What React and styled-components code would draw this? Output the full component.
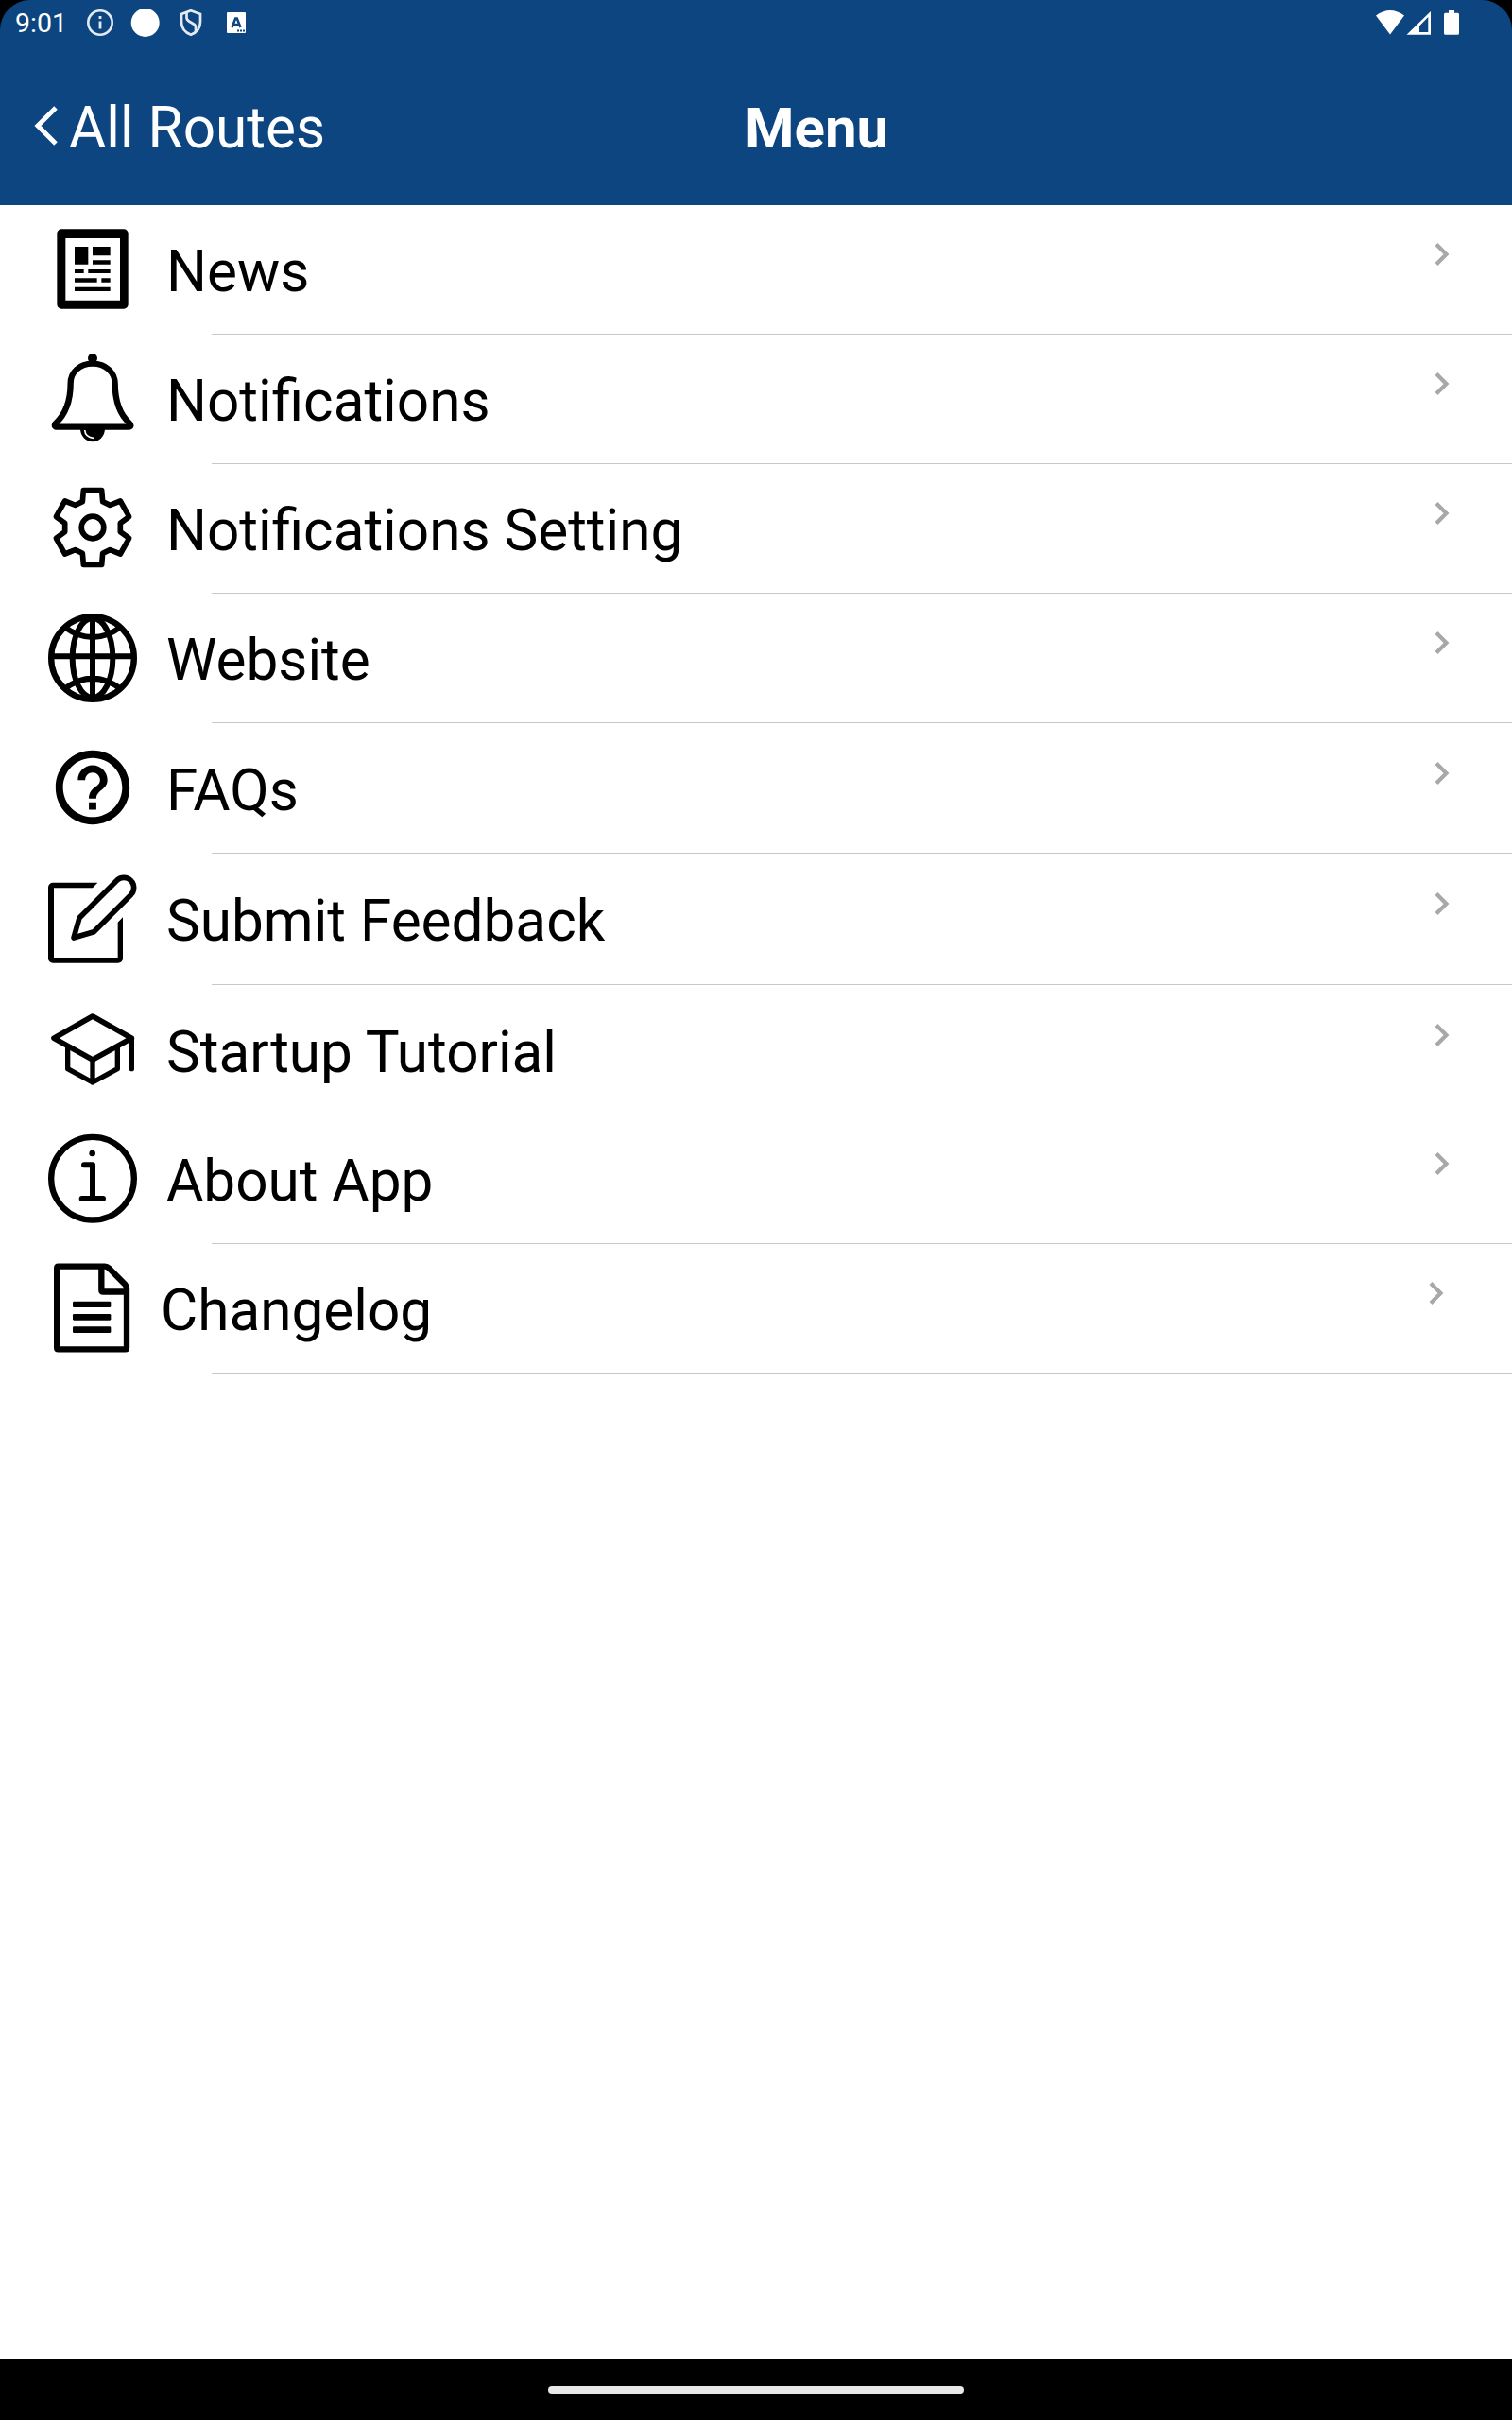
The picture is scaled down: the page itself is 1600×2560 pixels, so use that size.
import styled, { createGlobalStyle } from "styled-components";
import { MdHelpOutline } from "react-icons/md";

const GlobalStyle = createGlobalStyle`
  * {
    box-sizing: border-box;
  }

  body {
    margin: 0;
    background-color: #000;
    font-family: Roboto, "Liberation Sans", sans-serif;
  }
`;

const Screen = styled.div`
  display: flex;
  flex-direction: column;
  width: 1600px;
  height: 2560px;
  background-color: #000;
  overflow: hidden;
`;

const Header = styled.header`
  height: 217px;
  background-color: #0d4581;
  border-radius: 32px 32px 0 0;
  color: #fff;
`;

const StatusBar = styled.div`
  display: flex;
  justify-content: space-between;
  height: 48px;
  padding: 0 56px 0 16px;
`;

const StatusGroup = styled.div`
  display: flex;
  align-items: center;
`;

const Clock = styled.span`
  width: 74px;
  font-size: 28.500px;
  line-height: 48px;
  padding-top: 2px;
`;

const StatusIcon = styled.svg`
  display: block;
  width: ${({ $width }) => $width || 32}px;
  height: 48px;
  margin-right: ${({ $gap }) => $gap || 0}px;
`;

const NavBar = styled.nav`
  display: grid;
  grid-template-columns: 788px 1fr;
  height: 169px;
  padding-top: 53px;
`;

const BackButton = styled.div`
  display: flex;
  padding-left: 36px;
  font-size: 60.250px;
  line-height: 70px;
`;

const BackArrow = styled.svg`
  width: 37px;
  height: 70px;
`;

const Title = styled.h1`
  margin: 0;
  font-size: 60px;
  line-height: 70px;
  font-weight: 700;
`;

const MenuList = styled.ul`
  flex: 1;
  margin: 0;
  padding: 0;
  background-color: #fff;
  list-style: none;
`;

const MenuItem = styled.li`
  height: ${({ $height }) => $height}px;
  color: #000;
`;

const MenuRow = styled.div`
  display: flex;
  height: calc(100% - 1px);
  padding-left: 51px;
  padding-right: ${({ $shift }) => 64 + $shift}px;
`;

const MenuIcon = styled.svg`
  flex: none;
  width: 94px;
  height: 94px;
  margin-top: 21px;
  overflow: visible;
`;

const HelpIcon = styled(MdHelpOutline)`
  flex: none;
  width: 94px;
  height: 94px;
  margin-top: 21px;
`;

const Label = styled.span`
  flex: 1;
  margin-left: ${({ $shift }) => 31 - $shift}px;
  padding-top: ${({ $top }) => $top}px;
  font-size: 60.250px;
  line-height: 70px;
  white-space: nowrap;
`;

const Chevron = styled.svg`
  width: 20px;
  height: 30px;
  margin-top: ${({ $top }) => $top + 1}px;
`;

const Divider = styled.div`
  height: 1px;
  margin-left: 224px;
  background-color: #c8c8c8;
`;

const GestureBar = styled.footer`
  display: flex;
  justify-content: center;
  align-items: center;
  height: 64px;
`;

const GestureHandle = styled.div`
  width: 440px;
  height: 8px;
  border-radius: 4px;
  background-color: #e8e8e8;
`;

const NewsIcon = () => (
  <MenuIcon viewBox="0 0 282 282">
    <path
      fillRule="evenodd"
      d="M42 13H240a14 14 0 0 1 14 14V252a14 14 0 0 1-14 14H42a14 14 0 0 1-14-14V27a14 14 0 0 1 14-14ZM55 42V239H228V42Z"
    />
    <path d="M84 69h43v56H84ZM141 69h56v28h-56ZM141 112h56v13h-56ZM84 141h29v12H84ZM127 141h70v12h-70ZM84 169h71v13H84ZM169 169h28v13h-28ZM84 197h113v13H84Z" />
  </MenuIcon>
);

const BellIcon = () => (
  <MenuIcon viewBox="153 495 282 282">
    <circle cx="294" cy="507" r="15" />
    <path
      fill="none"
      stroke="#000"
      strokeWidth="19"
      strokeLinejoin="round"
      d="M294 524C252 524 224 552 224 586C224 640 212 682 176 714Q169 725 182 725H407Q420 725 412 714C376 682 365 640 365 586C364 552 336 524 294 524Z"
    />
    <path d="M255 730A39 42 0 0 0 333 730Z" />
    <path
      fill="none"
      stroke="#fff"
      strokeWidth="5"
      d="M269 735Q271 758 297 760"
    />
  </MenuIcon>
);

const GearIcon = () => (
  <MenuIcon
    viewBox="-141 -138 282 282"
    fill="none"
    stroke="#000"
    strokeWidth="17"
    strokeLinejoin="round"
  >
    <path d="M-29-118L29-118L32-82L55-71L88-84L116-34L88-14L88 14L116 34L88 84L55 71L32 82L29 118L-29 118L-32 82L-55 71L-88 84L-116 34L-88 14L-88-14L-116-34L-88-84L-55-71L-32-82Z" />
    <circle r="35.5" />
  </MenuIcon>
);

const GlobeIcon = () => (
  <MenuIcon
    viewBox="-141 -141 282 282"
    fill="none"
    stroke="#000"
    strokeWidth="18"
  >
    <circle r="131.5" strokeWidth="19" />
    <ellipse rx="64" ry="126" />
    <path d="M0-130V130M-130-5H130M-89-98Q0-34 89-98M-89 98Q0 32 89 98" />
  </MenuIcon>
);

const EditIcon = () => (
  <MenuIcon viewBox="153 492 282 282">
    <path d="M310 521H168a15 15 0 0 0-15 15V761a15 15 0 0 0 15 15H375a15 15 0 0 0 15-15V631L374 647V759H171V538H294Z" />
    <path
      fill="none"
      stroke="#000"
      strokeWidth="17"
      strokeLinejoin="round"
      d="M371.4 513.4A32 32 0 0 1 416.6 558.6L298 677L234 696L252 632.8Z"
    />
  </MenuIcon>
);

const CapIcon = () => (
  <MenuIcon
    viewBox="153 69 282 282"
    fill="none"
    stroke="#000"
    strokeWidth="17"
    strokeLinejoin="round"
    strokeLinecap="round"
  >
    <path d="M294 105L171 175L294 243L418 175Z" />
    <path
      strokeWidth="16"
      d="M418 175V272M215 205V272L294 315L373 272V205M294 243V315"
    />
  </MenuIcon>
);

const InfoIcon = () => (
  <MenuIcon
    viewBox="153 483 282 282"
    fill="none"
    stroke="#000"
    strokeWidth="18"
    strokeLinejoin="round"
    strokeLinecap="round"
  >
    <circle cx="294" cy="620" r="131.5" strokeWidth="19" />
    <circle cx="293" cy="540" r="10" fill="#000" stroke="none" />
    <path d="M267 577H294V684M260 684H327" />
  </MenuIcon>
);

const DocumentIcon = () => (
  <MenuIcon
    viewBox="153 111 282 282"
    fill="none"
    stroke="#000"
    strokeWidth="19"
    strokeLinejoin="round"
  >
    <path d="M185 119H333Q340 119 345 124L397 176Q402 181 402 189V377Q402 382 398 382H185Q180.500 382 180.500 377V124Q180.500 119 185 119Z" />
    <path d="M322 119V194Q322 199.500 328 199.500H402" />
    <g fill="#000" stroke="none">
      <rect x="231" y="230" width="121" height="19" rx="4" />
      <rect x="231" y="270" width="121" height="20" rx="4" />
      <rect x="231" y="310" width="121" height="20" rx="4" />
    </g>
  </MenuIcon>
);

const menuItems = [
  { label: "News", icon: NewsIcon, height: 137 },
  { label: "Notifications", icon: BellIcon, height: 137 },
  { label: "Notifications Setting", icon: GearIcon, height: 137 },
  { label: "Website", icon: GlobeIcon, height: 137 },
  { label: "FAQs", icon: HelpIcon, height: 138, top: 37 },
  { label: "Submit Feedback", icon: EditIcon, height: 139, top: 37 },
  { label: "Startup Tutorial", icon: CapIcon, height: 138, top: 37 },
  { label: "About App", icon: InfoIcon, height: 136, top: 35 },
  { label: "Changelog", icon: DocumentIcon, height: 137, shift: 6 },
];

const StatusIcons = () => (
  <>
    <StatusIcon viewBox="0 0 32 48" $gap={16} fill="none" stroke="#e3eaf2">
      <circle cx="16" cy="24" r="12.700" strokeWidth="2.600" />
      <path d="M16 22.500V30.500M16 17V20" strokeWidth="2.800" />
    </StatusIcon>
    <StatusIcon viewBox="0 0 32 48" $gap={16}>
      <circle cx="15.700" cy="24" r="15" fill="#fff" />
    </StatusIcon>
    <StatusIcon
      viewBox="0 0 32 48"
      $gap={16}
      fill="none"
      stroke="#e3eaf2"
      strokeWidth="2.700"
    >
      <path d="M16 11.300L26 15V23C26 29.500 22 34.500 16 36.700C10 34.500 6 29.500 6 23V15Z" />
      <path d="M11.500 13.500V18.500Q11.500 21 14 22.500L19 25.500Q21.500 27 21 30V33.500" />
    </StatusIcon>
    <StatusIcon viewBox="0 0 32 48">
      <rect x="6" y="13" width="20" height="22" rx="1" fill="#fff" />
      <path
        d="M11.500 29L15.200 19.500H16.800L20.500 29M13 26H19"
        fill="none"
        stroke="#0d4581"
        strokeWidth="2.500"
      />
      <path d="M17 32.500H26" stroke="#0d4581" strokeWidth="2" strokeDasharray="2 1" />
    </StatusIcon>
  </>
);

const SystemIcons = () => (
  <>
    <StatusIcon viewBox="0 0 30 48" $width={30} $gap={2}>
      <path d="M0 16.500Q15 5.500 30 16.500L15 36.500Z" fill="#fff" />
    </StatusIcon>
    <StatusIcon viewBox="0 0 26 48" $width={26} $gap={14}>
      <path
        fillRule="evenodd"
        fill="#fff"
        d="M26 12V36.700H.5ZM23.300 18L14 27.500V34H23.300Z"
      />
    </StatusIcon>
    <StatusIcon viewBox="0 0 16 48" $width={16}>
      <path
        d="M5 11H11V13.700H14.500Q16 13.700 16 15.200V35.200Q16 36.700 14.500 36.700H1.500Q0 36.700 0 35.200V15.200Q0 13.700 1.500 13.700H5Z"
        fill="#fff"
      />
    </StatusIcon>
  </>
);

const App = () => {
  return (
    <Screen>
      <GlobalStyle />
      <Header>
        <StatusBar>
          <StatusGroup>
            <Clock>9:01</Clock>
            <StatusIcons />
          </StatusGroup>
          <StatusGroup>
            <SystemIcons />
          </StatusGroup>
        </StatusBar>
        <NavBar>
          <BackButton>
            <BackArrow viewBox="0 0 37 70">
              <path
                d="M23 13L4 32L23 51"
                fill="none"
                stroke="#fff"
                strokeWidth="5"
              />
            </BackArrow>
            All Routes
          </BackButton>
          <Title>Menu</Title>
        </NavBar>
      </Header>
      <MenuList>
        {menuItems.map(({ label, icon: Icon, height, top = 36, shift = 0 }) => (
          <MenuItem key={label} $height={height}>
            <MenuRow $shift={shift}>
              <Icon />
              <Label $shift={shift} $top={top}>
                {label}
              </Label>
              <Chevron viewBox="0 0 20 30" $top={top}>
                <path
                  d="M4 4.500L14.500 15L4 25.500"
                  fill="none"
                  stroke="#a8a8a8"
                  strokeWidth="4.200"
                />
              </Chevron>
            </MenuRow>
            <Divider />
          </MenuItem>
        ))}
      </MenuList>
      <GestureBar>
        <GestureHandle />
      </GestureBar>
    </Screen>
  );
};

export default App;
